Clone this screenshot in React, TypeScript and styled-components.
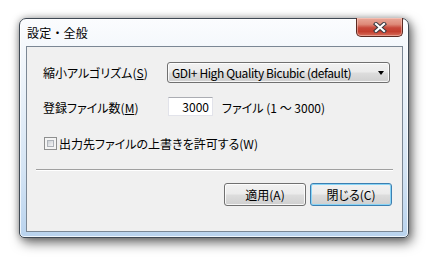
import React from 'react';
import styled, { createGlobalStyle, css } from 'styled-components';

const GlobalStyle = createGlobalStyle`
  html, body {
    margin: 0;
    padding: 0;
    background: #ffffff;
  }
  body {
    font-family: "Noto Sans CJK JP", "Liberation Sans", sans-serif;
    font-size: 12px;
    color: #000;
  }
`;

const Page = styled.div`
  width: 430px;
  height: 259px;
  box-sizing: border-box;
  padding: 18px 21px 21px 19px;
  background: #ffffff;
`;

const Window = styled.div`
  height: 100%;
  box-sizing: border-box;
  display: flex;
  flex-direction: column;
  padding: 0 5px 5px 6px;
  border: 1px solid #3f4954;
  border-radius: 7px 7px 5px 5px;
  background: linear-gradient(180deg, #fbfcfe 0%, #eef4fa 25%, #d4e4f4 70%, #b9d3ee 100%);
  box-shadow:
    inset 0 0 0 1px rgba(255, 255, 255, 0.75),
    3px 5px 12px rgba(0, 0, 0, 0.55),
    0 0 7px rgba(0, 0, 0, 0.3);
`;

const TitleBar = styled.div`
  height: 27px;
  display: flex;
  justify-content: space-between;
  align-items: flex-start;
`;

const Title = styled.div`
  padding: 5px 0 0 1px;
  font-size: 12px;
  line-height: 17px;
  letter-spacing: 0.2px;
  color: #000;
`;

const CloseButton = styled.div`
  width: 47px;
  height: 19px;
  margin: -1px 0 0 0;
  box-sizing: border-box;
  display: flex;
  align-items: center;
  justify-content: center;
  border: 1px solid #5b2a22;
  border-top: none;
  border-radius: 0 0 5px 5px;
  background: linear-gradient(
    180deg,
    #e9a899 0%,
    #de8a79 35%,
    #c7483a 55%,
    #c43e2e 75%,
    #d6705d 100%
  );
  box-shadow: inset 0 0 0 1px rgba(255, 220, 210, 0.45);
`;

const Client = styled.div`
  flex: 1;
  display: flex;
  flex-direction: column;
  padding: 15px 9px 0 9px;
  border: 1px solid #7b8794;
  background: #f0f0f0;
  font-feature-settings: "palt";
`;

const Form = styled.div`
  display: grid;
  grid-template-columns: 124px 1fr;
  row-gap: 14px;
  padding-left: 7px;
`;

const Label = styled.div`
  height: 21px;
  display: flex;
  align-items: center;
  white-space: nowrap;
`;

const Control = styled.div`
  display: flex;
  align-items: center;
`;

const winButton = css`
  box-sizing: border-box;
  border: 1px solid #707070;
  border-radius: 3px;
  background: linear-gradient(180deg, #f2f2f2 0%, #ebebeb 48%, #dddddd 52%, #cfcfcf 100%);
  box-shadow: inset 0 0 0 1px rgba(255, 255, 255, 0.8);
`;

const Combo = styled.div`
  ${winButton};
  width: 223px;
  height: 21px;
  display: flex;
  align-items: center;
  justify-content: space-between;
  padding: 0 5px 0 4px;
  white-space: nowrap;
  font-feature-settings: normal;
  letter-spacing: -0.4px;
`;

const Arrow = styled.span`
  width: 0;
  height: 0;
  border-left: 3.5px solid transparent;
  border-right: 3.5px solid transparent;
  border-top: 4px solid #000;
`;

const NumberInput = styled.div`
  width: 45px;
  height: 19px;
  box-sizing: border-box;
  margin: 0 0 2px 1px;
  display: flex;
  align-items: center;
  justify-content: flex-end;
  padding-right: 3px;
  background: #ffffff;
  border: 1px solid #e2e3ea;
  border-top-color: #abadb3;
`;

const Hint = styled.span`
  margin-left: 9px;
  white-space: nowrap;
`;

const CheckRow = styled.div`
  display: flex;
  align-items: center;
  height: 15px;
  margin: 18px 0 0 8px;
  white-space: nowrap;
`;

const CheckBox = styled.span`
  width: 13px;
  height: 13px;
  box-sizing: border-box;
  margin-right: 2px;
  padding: 2px;
  border: 1px solid #8e8f8f;
  background: #f4f4f4;
  display: flex;

  &::after {
    content: '';
    flex: 1;
    border: 1px solid #aeb3b9;
    background: linear-gradient(135deg, #cbcfd5 0%, #f6f6f6 100%);
  }
`;

const Separator = styled.div`
  height: 1px;
  margin-top: 18px;
  background: #a0a0a0;
  border-bottom: 1px solid #ffffff;
`;

const ButtonRow = styled.div`
  display: flex;
  justify-content: flex-end;
  gap: 4px;
  margin-top: 12px;
  padding-right: 1px;
`;

const PushButton = styled.div<{ $default?: boolean }>`
  ${winButton};
  width: 82px;
  height: 23px;
  display: flex;
  align-items: center;
  justify-content: center;
  ${(p) =>
    p.$default &&
    css`
      border-color: #3c7fb1;
      box-shadow: inset 0 0 0 1px #88d4f6;
    `}
`;

const CloseGlyph = () => (
  <svg width="14" height="11" viewBox="0 0 14 11">
    <path d="M3 2 L11 9 M11 2 L3 9" stroke="#3a3a40" strokeWidth="4.2" strokeLinecap="square" fill="none" />
    <path d="M3 2 L11 9 M11 2 L3 9" stroke="#ffffff" strokeWidth="2.2" strokeLinecap="square" fill="none" />
  </svg>
);

const App: React.FC = () => {
  return (
    <Page>
      <GlobalStyle />
      <Window>
        <TitleBar>
          <Title>設定・全般</Title>
          <CloseButton>
            <CloseGlyph />
          </CloseButton>
        </TitleBar>
        <Client>
          <Form>
            <Label>縮小アルゴリズム(<u>S</u>)</Label>
            <Control>
              <Combo>
                <span>GDI+ High Quality Bicubic (default)</span>
                <Arrow />
              </Combo>
            </Control>
            <Label>登録ファイル数(<u>M</u>)</Label>
            <Control>
              <NumberInput>3000</NumberInput>
              <Hint>ファイル (1 ～ 3000)</Hint>
            </Control>
          </Form>
          <CheckRow>
            <CheckBox />
            出力先ファイルの上書きを許可する(W)
          </CheckRow>
          <Separator />
          <ButtonRow>
            <PushButton>適用(A)</PushButton>
            <PushButton $default>閉じる(C)</PushButton>
          </ButtonRow>
        </Client>
      </Window>
    </Page>
  );
};

export default App;
